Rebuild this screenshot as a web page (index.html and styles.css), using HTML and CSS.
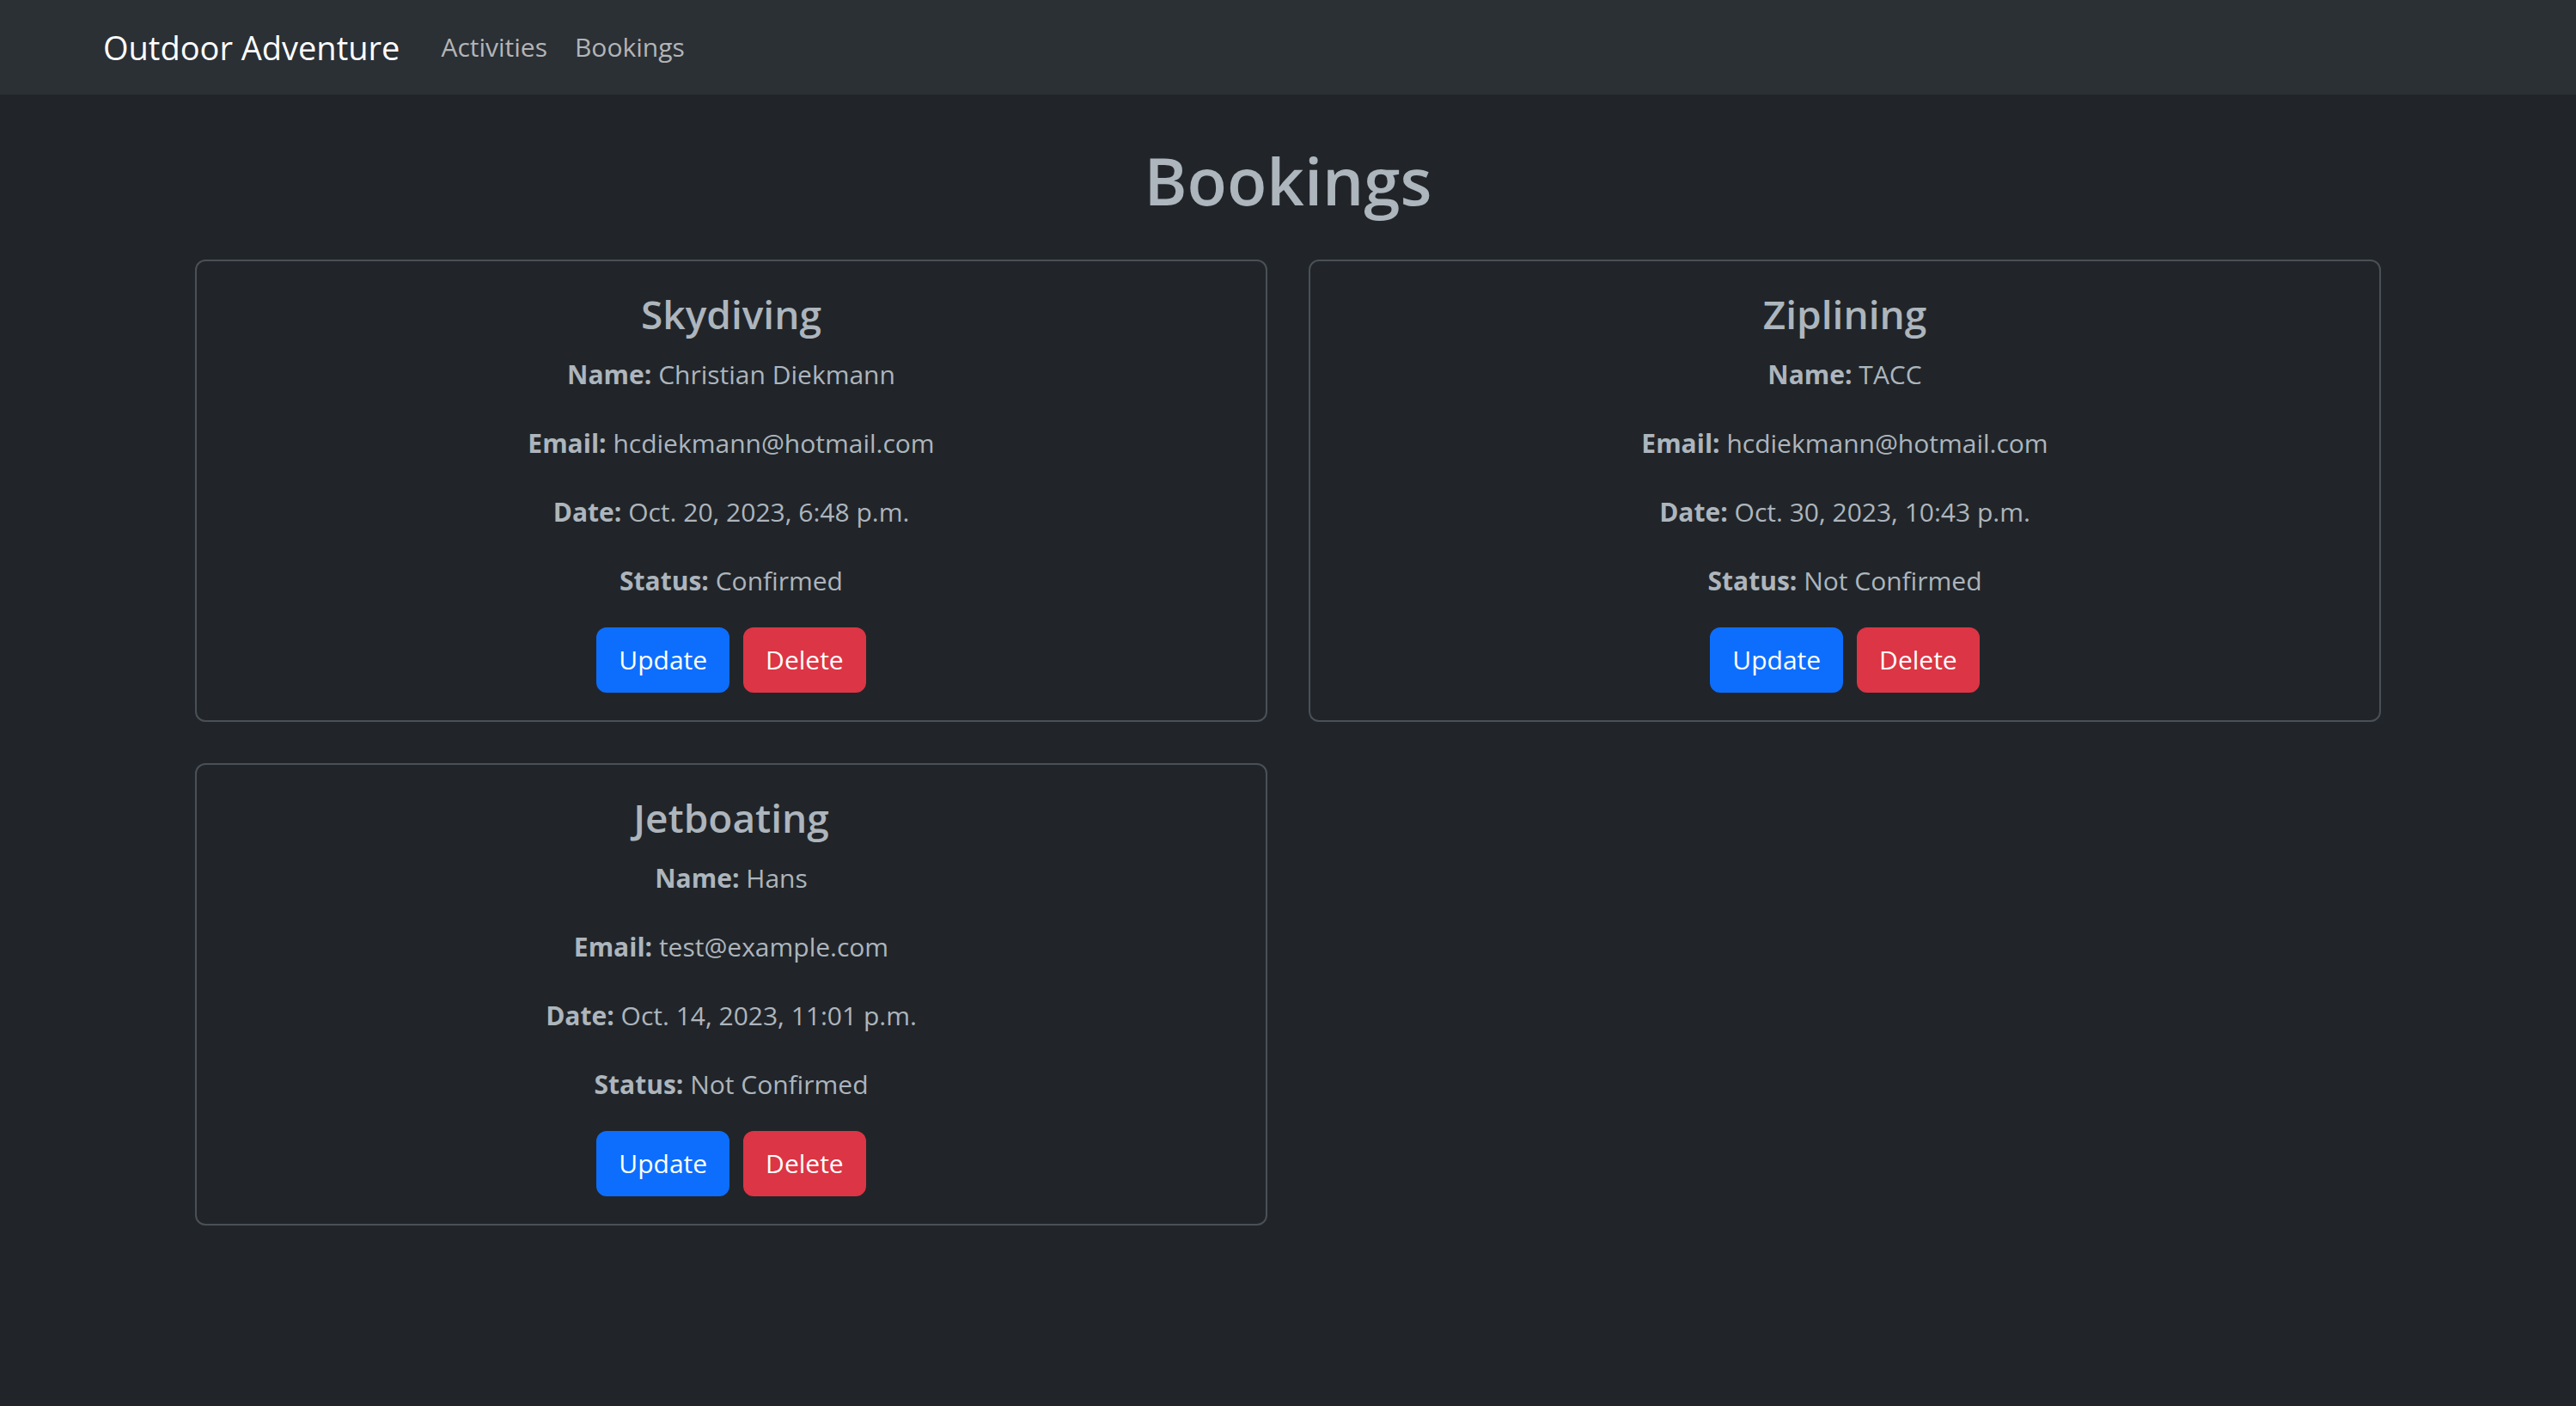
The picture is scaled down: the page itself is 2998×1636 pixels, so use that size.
FILE: index.html
```html
<!DOCTYPE html>
<html lang="en">
<head>
<meta charset="utf-8">
<title>Bookings</title>
<link rel="stylesheet" href="styles.css">
</head>
<body>
<nav class="navbar">
  <div class="navbar-inner">
    <a class="brand" href="#">Outdoor Adventure</a>
    <ul class="nav">
      <li><a class="nav-link" href="#">Activities</a></li>
      <li><a class="nav-link" href="#">Bookings</a></li>
    </ul>
  </div>
</nav>
<main class="page">
  <h1 class="page-title">Bookings</h1>
  <div class="card-grid">
    <div class="card">
      <h4 class="card-title">Skydiving</h4>
      <p><strong>Name:</strong> Christian Diekmann</p>
      <p><strong>Email:</strong> hcdiekmann@hotmail.com</p>
      <p><strong>Date:</strong> Oct. 20, 2023, 6:48 p.m.</p>
      <p class="last"><strong>Status:</strong> Confirmed</p>
      <div class="actions">
        <a class="btn btn-primary" href="#">Update</a>
        <a class="btn btn-danger" href="#">Delete</a>
      </div>
    </div>
    <div class="card">
      <h4 class="card-title">Ziplining</h4>
      <p><strong>Name:</strong> TACC</p>
      <p><strong>Email:</strong> hcdiekmann@hotmail.com</p>
      <p><strong>Date:</strong> Oct. 30, 2023, 10:43 p.m.</p>
      <p class="last"><strong>Status:</strong> Not Confirmed</p>
      <div class="actions">
        <a class="btn btn-primary" href="#">Update</a>
        <a class="btn btn-danger" href="#">Delete</a>
      </div>
    </div>
    <div class="card">
      <h4 class="card-title">Jetboating</h4>
      <p><strong>Name:</strong> Hans</p>
      <p><strong>Email:</strong> test@example.com</p>
      <p><strong>Date:</strong> Oct. 14, 2023, 11:01 p.m.</p>
      <p class="last"><strong>Status:</strong> Not Confirmed</p>
      <div class="actions">
        <a class="btn btn-primary" href="#">Update</a>
        <a class="btn btn-danger" href="#">Delete</a>
      </div>
    </div>
  </div>
</main>
</body>
</html>
```
FILE: styles.css
```css
* { box-sizing: border-box; }
html, body {
  margin: 0;
  padding: 0;
}
body {
  background: #212529;
  color: #adb5bd;
  font-family: "Open Sans", "Noto Sans", "Liberation Sans", sans-serif;
  font-size: 30px;
  line-height: 1.5;
  min-height: 1636px;
}
a { text-decoration: none; }

.navbar {
  background: #2b3035;
  height: 110px;
  display: flex;
  align-items: center;
}
.navbar-inner {
  display: flex;
  align-items: center;
  padding-left: 120px;
}
.brand {
  color: #ffffff;
  font-size: 38px;
  line-height: 60px;
  margin-right: 32px;
}
.nav {
  display: flex;
  list-style: none;
  margin: 0;
  padding: 0;
}
.nav-link {
  display: block;
  padding: 0 16px;
  color: #b3b5b7;
  font-size: 30px;
  line-height: 48px;
}

.page {
  padding-top: 52px;
}
.page-title {
  margin: 0 0 44px;
  text-align: center;
  font-size: 76px;
  line-height: 96px;
  font-weight: 600;
  color: #adb5bd;
}
.card-grid {
  width: 2544px;
  margin: 0 auto;
  display: grid;
  grid-template-columns: 1fr 1fr;
  gap: 48px;
}
.card {
  border: 2px solid #495057;
  border-radius: 12px;
  padding: 32px;
  text-align: center;
}
.card-title {
  margin: 0 0 18px;
  font-size: 46px;
  line-height: 58px;
  font-weight: 600;
  color: #adb5bd;
}
.card p {
  margin: 0 0 32px;
  line-height: 48px;
}
.card p.last {
  margin-bottom: 30px;
}
.card strong { font-weight: 700; }
.actions {
  display: flex;
  justify-content: center;
  gap: 16px;
}
.btn {
  display: inline-block;
  padding: 12px 24px;
  border: 2px solid transparent;
  border-radius: 12px;
  font-size: 30px;
  line-height: 48px;
  color: #ffffff;
}
.btn-primary { background: #0d6efd; border-color: #0d6efd; }
.btn-danger { background: #dc3545; border-color: #dc3545; }
```
